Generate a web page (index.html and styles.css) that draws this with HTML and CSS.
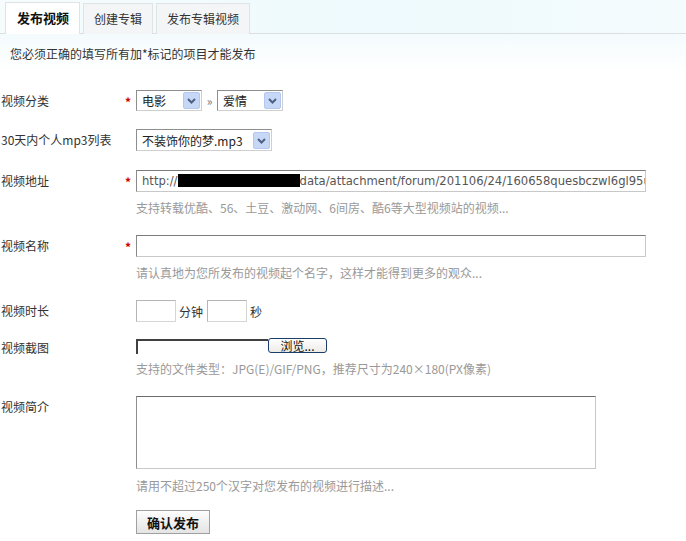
FILE: index.html
```html
<!DOCTYPE html>
<html lang="zh-CN">
  <head>
    <meta charset="UTF-8" />
    <title>发布视频</title>
    <link rel="stylesheet" href="styles.css">
  </head>
  <body>
    <nav class="tabs">
      <a class="tab active" href="#">发布视频</a>
      <a class="tab" href="#">创建专辑</a>
      <a class="tab" href="#">发布专辑视频</a>
    </nav>

    <p class="notice">您必须正确的填写所有加*标记的项目才能发布</p>

    <form class="form" onsubmit="return false">
      <div class="row row-cat">
        <label class="label">视频分类</label>
        <span class="star">*</span>
        <div class="control inline">
          <span class="select sel-small">
            <select><option>电影</option></select>
            <svg class="arrow" width="17" height="17" viewBox="0 0 17 17" aria-hidden="true">
              <rect x="0.5" y="0.5" width="16" height="16" rx="1.5" fill="#c6d8f6" stroke="#b3c8ee"/>
              <path d="M5 7 L8.5 10.5 L12 7" fill="none" stroke="#4d6185" stroke-width="2"/>
            </svg>
          </span>
          <span class="sep">»</span>
          <span class="select sel-small">
            <select><option>爱情</option></select>
            <svg class="arrow" width="17" height="17" viewBox="0 0 17 17" aria-hidden="true">
              <rect x="0.5" y="0.5" width="16" height="16" rx="1.5" fill="#c6d8f6" stroke="#b3c8ee"/>
              <path d="M5 7 L8.5 10.5 L12 7" fill="none" stroke="#4d6185" stroke-width="2"/>
            </svg>
          </span>
        </div>
      </div>

      <div class="row row-mp3">
        <label class="label">30天内个人mp3列表</label>
        <span class="star"></span>
        <div class="control">
          <span class="select sel-wide">
            <select><option>不装饰你的梦.mp3</option></select>
            <svg class="arrow" width="17" height="17" viewBox="0 0 17 17" aria-hidden="true">
              <rect x="0.5" y="0.5" width="16" height="16" rx="1.5" fill="#c6d8f6" stroke="#b3c8ee"/>
              <path d="M5 7 L8.5 10.5 L12 7" fill="none" stroke="#4d6185" stroke-width="2"/>
            </svg>
          </span>
        </div>
      </div>

      <div class="row">
        <label class="label">视频地址</label>
        <span class="star">*</span>
        <div class="control">
          <div class="text-input url" role="textbox">http://<span class="redact"></span>data/attachment/forum/201106/24/160658quesbczwl6gl95ue.swf</div>
          <p class="hint">支持转载优酷、56、土豆、激动网、6间房、酷6等大型视频站的视频...</p>
        </div>
      </div>

      <div class="row">
        <label class="label">视频名称</label>
        <span class="star">*</span>
        <div class="control">
          <input class="text-input" type="text" />
          <p class="hint">请认真地为您所发布的视频起个名字，这样才能得到更多的观众...</p>
        </div>
      </div>

      <div class="row row-time">
        <label class="label">视频时长</label>
        <span class="star"></span>
        <div class="control inline">
          <input class="short-input" type="text" />
          <span class="unit">分钟</span>
          <input class="short-input" type="text" />
          <span class="unit">秒</span>
        </div>
      </div>

      <div class="row row-file">
        <label class="label">视频截图</label>
        <span class="star"></span>
        <div class="control">
          <div class="file">
            <span class="file-box"></span>
            <button class="browse" type="button">浏览...</button>
          </div>
          <p class="hint">支持的文件类型：JPG(E)/GIF/PNG，推荐尺寸为240×180(PX像素)</p>
        </div>
      </div>

      <div class="row row-intro">
        <label class="label">视频简介</label>
        <span class="star"></span>
        <div class="control">
          <textarea class="intro"></textarea>
          <p class="hint">请用不超过250个汉字对您发布的视频进行描述...</p>
        </div>
      </div>

      <div class="row">
        <span class="label"></span>
        <span class="star"></span>
        <div class="control">
          <button class="submit" type="submit">确认发布</button>
        </div>
      </div>
    </form>
  </body>
</html>
```

FILE: styles.css
```css
/* Base */
* {
  box-sizing: border-box;
}
body {
  margin: 0;
  font-family: "Noto Sans CJK SC", "Liberation Sans", sans-serif;
  font-size: 12px;
  color: #333;
  background: #fff;
}

/* Tabs */
.tabs {
  display: flex;
  align-items: flex-end;
  height: 34px;
  padding: 3px 0 0 5px;
  background: linear-gradient(to right, #f6fcfd, #eefafd 55%, #f4fbfd);
  border-bottom: 1px solid #dcdfe0;
}
.tab {
  display: block;
  height: 31px;
  line-height: 29px;
  padding: 0 10px;
  margin-right: 3px;
  margin-bottom: -1px;
  color: #333;
  text-decoration: none;
  background: #f3f5f6;
  border: 1px solid #dfe3e4;
  border-bottom: none;
}
.tab.active {
  background: #fff;
  font-weight: bold;
  font-size: 13px;
  color: #111;
  height: 32px;
  padding: 0 10px 0 11px;
}

/* Notice line */
.notice {
  margin: 0;
  padding: 11px 10px 10px;
  line-height: 17px;
  background: linear-gradient(#f4fbfd, #fff);
}

/* Form rows */
.form {
  padding-top: 18px;
}
.row {
  display: flex;
  align-items: flex-start;
  margin-bottom: 19px;
}
.row-cat {
  margin-bottom: 15px;
}
.row-time {
  margin-bottom: 17px;
}
.row-file {
  margin-bottom: 19px;
}
.row-intro {
  margin-bottom: 16px;
}
.label {
  flex: 0 0 120px;
  padding-left: 1px;
  line-height: 22px;
  white-space: nowrap;
}
.row-file .label {
  line-height: 18px;
}
.star {
  flex: 0 0 16px;
  color: #c00;
  font-weight: bold;
  line-height: 24px;
  text-align: center;
}
.control {
  flex: 1;
}
.control.inline {
  display: flex;
  align-items: center;
}
.hint {
  margin: 7px 0 0;
  line-height: 17px;
  color: #999;
}

/* Selects */
.select {
  position: relative;
  display: inline-block;
  height: 21px;
}
.select select {
  appearance: none;
  width: 100%;
  height: 100%;
  padding: 0 0 0 5px;
  font: 12px "Noto Sans CJK SC", sans-serif;
  color: #222;
  background: #fff;
  border: 1px solid;
  border-color: #8e8e8e #cfcfcf #cfcfcf #8e8e8e;
  border-radius: 0;
}
.select .arrow {
  position: absolute;
  right: 2px;
  top: 2px;
}
.sel-small {
  width: 66px;
}
.sel-wide {
  width: 136px;
  height: 22px;
}
.sel-wide .arrow {
  top: 3px;
}
.sep {
  width: 15px;
  text-align: center;
  color: #777;
  font-size: 12px;
}

/* Text inputs */
.text-input {
  display: block;
  width: 510px;
  height: 22px;
  padding: 0 5px;
  border: 1px solid;
  border-color: #7c7c7c #c8c8c8 #c8c8c8 #8a8a8a;
  background: #fff;
  font: 11.6px "DejaVu Sans", Verdana, sans-serif;
  color: #555;
  line-height: 20px;
}
.url {
  overflow: hidden;
  white-space: nowrap;
}
.redact {
  display: inline-block;
  width: 122px;
  height: 13px;
  vertical-align: -2px;
  background: #000;
}
.short-input {
  width: 40px;
  height: 22px;
  border: 1px solid;
  border-color: #b5b5b5 #d6d6d6 #d6d6d6 #b5b5b5;
}
.unit {
  padding: 0 4px 0 3px;
}

/* File field */
.file {
  display: flex;
  align-items: flex-start;
  height: 15px;
}
.file-box {
  width: 132px;
  height: 15px;
  border-top: 2px solid #404040;
  border-left: 2px solid #404040;
}
.browse {
  width: 59px;
  height: 15px;
  padding: 0;
  margin-top: -1px;
  font: 12px "Noto Sans CJK SC", sans-serif;
  line-height: 12px;
  color: #111;
  background: linear-gradient(#fff, #ecebe6);
  border: 1px solid #1c3d6a;
  border-radius: 3px;
}
.row-file .hint {
  margin-top: 6px;
}

/* Textarea */
.intro {
  display: block;
  width: 460px;
  height: 73px;
  resize: none;
  border: 1px solid;
  border-color: #6c6c6c #c8c8c8 #c8c8c8 #8e8e8e;
}
.intro + .hint {
  margin-top: 8px;
}

/* Submit */
.submit {
  width: 74px;
  height: 24px;
  padding: 0;
  font: bold 13px "Noto Sans CJK SC", sans-serif;
  color: #111;
  background: linear-gradient(#fdfdfd, #e4e4e4);
  border: 1px solid #a0a0a0;
}
```
